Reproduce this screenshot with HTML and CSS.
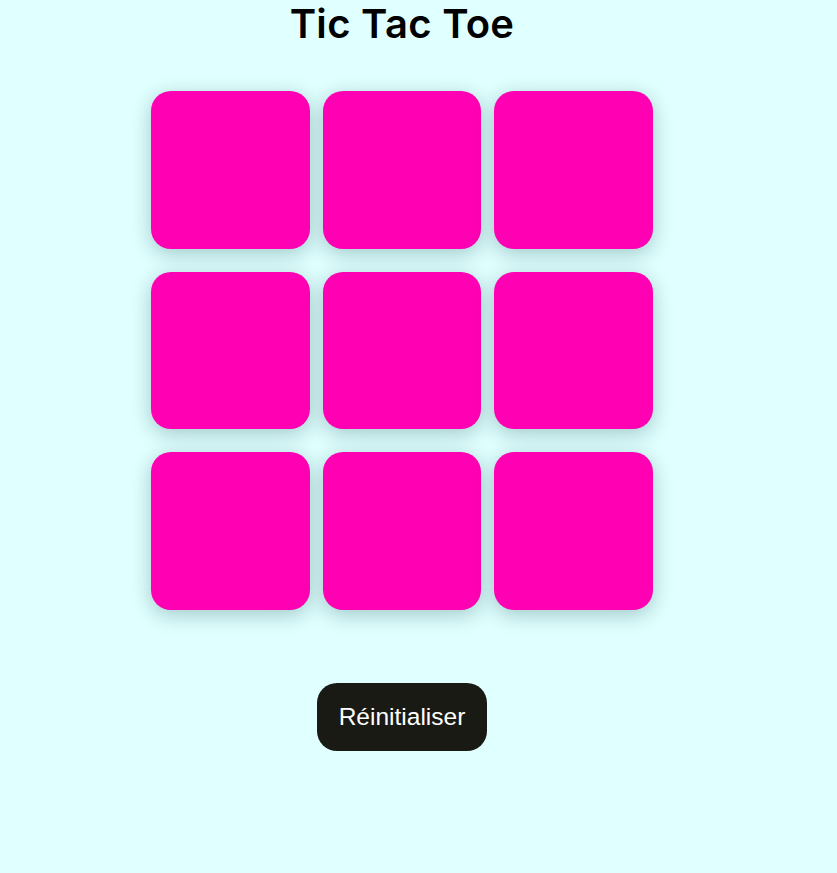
FILE: index.html
```html
<!DOCTYPE html>
<html lang="fr">
<head>
<meta charset="utf-8">
<title>Tic Tac Toe</title>
<link rel="stylesheet" href="styles.css">
</head>
<body>
<main class="app">
  <h1 class="title">Tic Tac Toe</h1>
  <div class="board">
    <div class="cell"></div>
    <div class="cell"></div>
    <div class="cell"></div>
    <div class="cell"></div>
    <div class="cell"></div>
    <div class="cell"></div>
    <div class="cell"></div>
    <div class="cell"></div>
    <div class="cell"></div>
  </div>
  <button class="reset">Réinitialiser</button>
</main>
</body>
</html>
```
FILE: styles.css
```css
html, body {
  margin: 0;
  padding: 0;
  background: #e0ffff;
}
body {
  width: 837px;
  height: 873px;
  overflow: hidden;
}
.app {
  width: 804px;
  display: flex;
  flex-direction: column;
  align-items: center;
}
.title {
  margin: 0;
  padding-top: 2px;
  font-family: "Inter", "Liberation Sans", sans-serif;
  font-weight: 600;
  font-size: 40px;
  letter-spacing: 0.3px;
  line-height: 44px;
  color: #000;
}
.board {
  margin-top: 45px;
  width: 502px;
  display: grid;
  grid-template-columns: repeat(3, 1fr);
  grid-auto-rows: 157.6px;
  column-gap: 13px;
  row-gap: 23px;
}
.cell {
  background: #ff00b3;
  border-radius: 20px;
  box-shadow: 0 5px 20px rgba(0, 60, 60, 0.28);
}
.reset {
  margin-top: 73px;
  width: 170px;
  height: 68px;
  border: none;
  border-radius: 20px;
  background: #1a1a14;
  color: #fff;
  font-family: "Liberation Sans", Arial, sans-serif;
  font-size: 24.5px;
  cursor: pointer;
}
```
